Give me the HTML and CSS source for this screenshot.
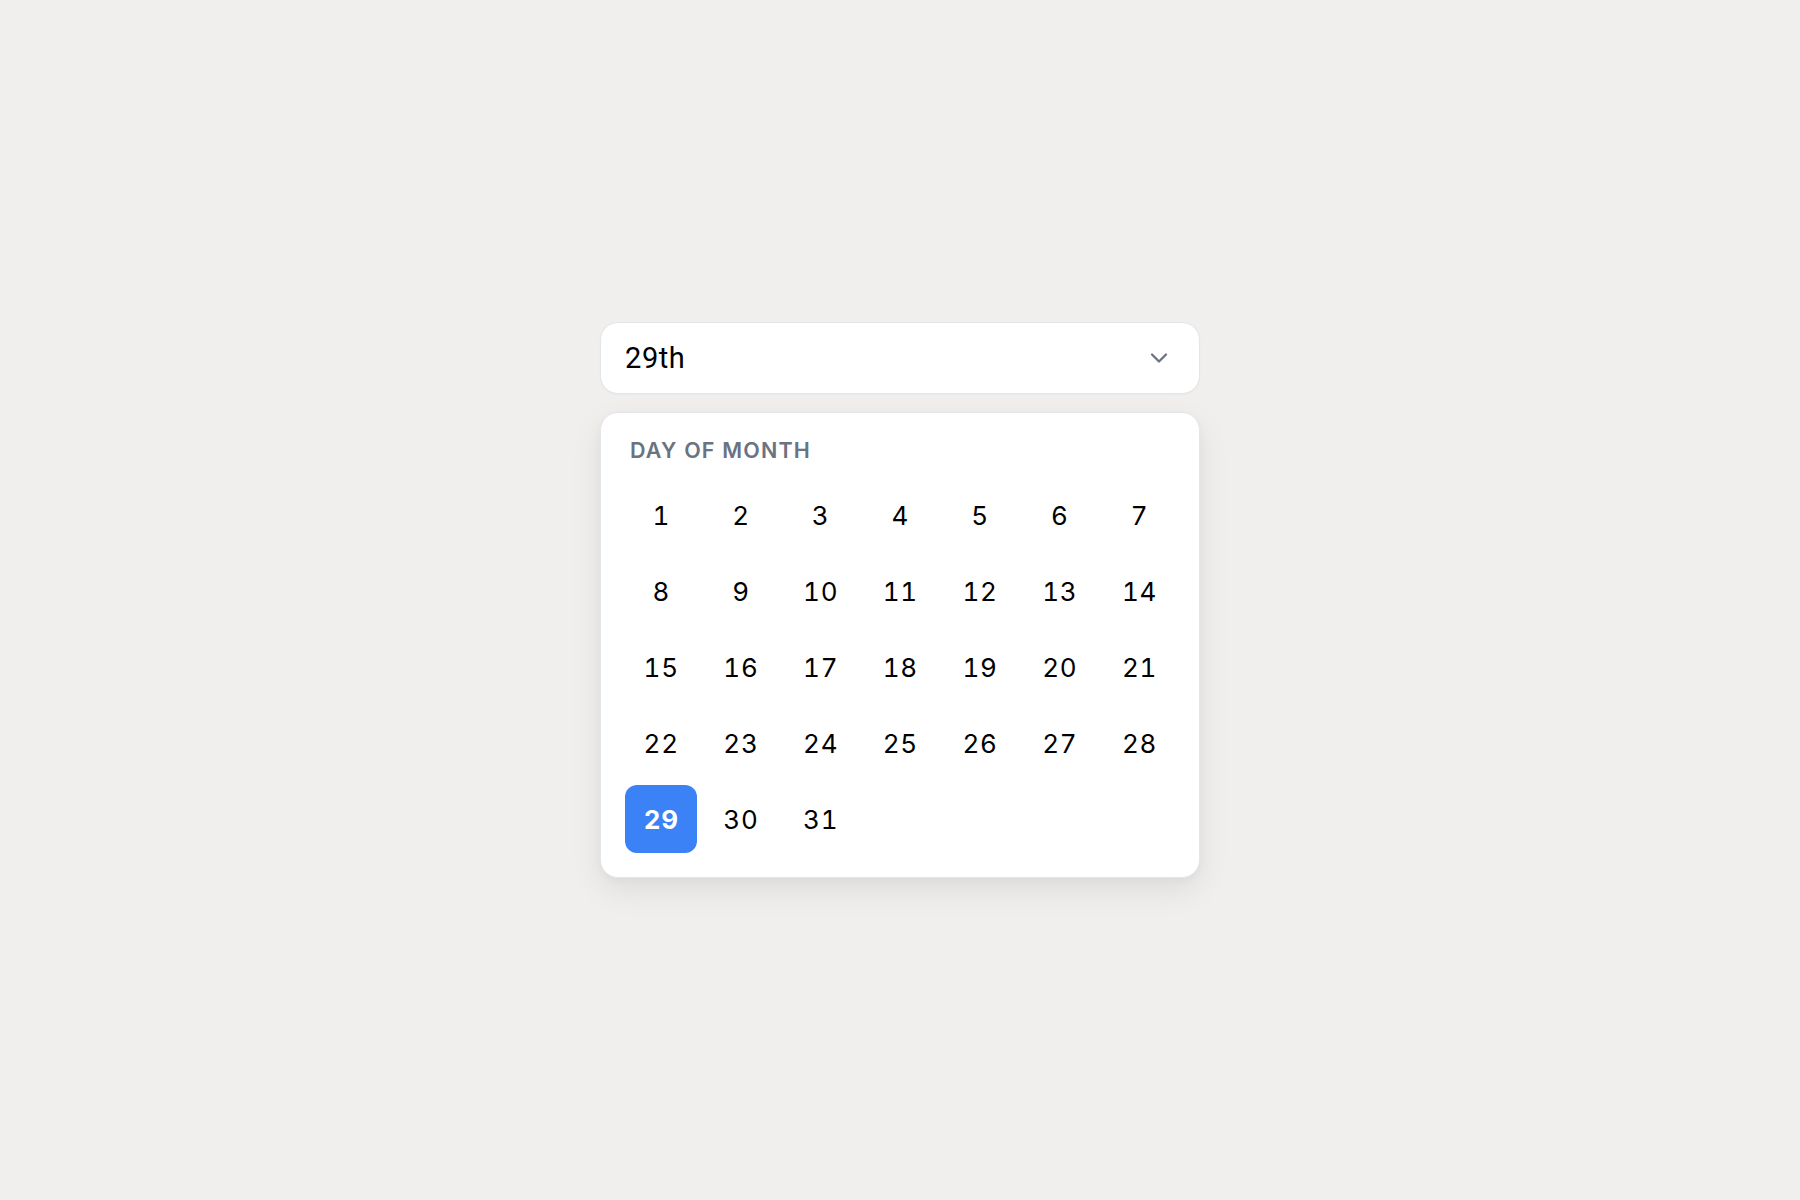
FILE: index.html
```html
<!DOCTYPE html>
<html lang="en">
<head>
  <meta charset="UTF-8">
  <meta name="viewport" content="width=device-width, initial-scale=1.0">
  <title>Day of Month</title>
  <link rel="stylesheet" href="styles.css">
</head>
<body>

  <!-- ───────── day picker ───────── -->
  <main class="picker">
    <button class="picker-trigger" type="button">
      <span class="picker-value">29th</span>
      <svg class="chevron" width="28" height="28" viewBox="0 0 24 24" fill="none" stroke="currentColor" stroke-width="2" stroke-linecap="round" stroke-linejoin="round">
        <path d="m6 9 6 6 6-6"/>
      </svg>
    </button>

    <div class="picker-panel">
      <div class="panel-label">Day of month</div>
      <div class="day-grid">
        <button class="day">1</button>
        <button class="day">2</button>
        <button class="day">3</button>
        <button class="day">4</button>
        <button class="day">5</button>
        <button class="day">6</button>
        <button class="day">7</button>
        <button class="day">8</button>
        <button class="day">9</button>
        <button class="day">10</button>
        <button class="day">11</button>
        <button class="day">12</button>
        <button class="day">13</button>
        <button class="day">14</button>
        <button class="day">15</button>
        <button class="day">16</button>
        <button class="day">17</button>
        <button class="day">18</button>
        <button class="day">19</button>
        <button class="day">20</button>
        <button class="day">21</button>
        <button class="day">22</button>
        <button class="day">23</button>
        <button class="day">24</button>
        <button class="day">25</button>
        <button class="day">26</button>
        <button class="day">27</button>
        <button class="day">28</button>
        <button class="day selected">29</button>
        <button class="day">30</button>
        <button class="day">31</button>
      </div>
    </div>
  </main>

</body>
</html>
```

FILE: styles.css
```css
/* Basic reset and layout */
html, body {
    margin: 0;
    padding: 0;
    height: 100vh;
    background-color: #f0efed;
    font-family: Inter, "Noto Sans", sans-serif;
}

body {
    display: flex;
    justify-content: center;
    align-items: center;
}

/* Picker wrapper */
.picker {
    width: 600px;
    display: flex;
    flex-direction: column;
    gap: 18px;
}

/* Select-like trigger */
.picker-trigger {
    display: flex;
    align-items: center;
    justify-content: space-between;
    height: 72px;
    padding: 0 26px 0 24px;
    background-color: #fff;
    border: 1px solid #e4e5e9;
    border-radius: 18px;
    box-sizing: border-box;
    box-shadow: 0 1px 2px rgba(0, 0, 0, 0.03);
    cursor: pointer;
    font-family: Roboto, "Liberation Sans", sans-serif;
    font-size: 29px;
    letter-spacing: 0.02em;
    color: #000;
}

.chevron {
    color: #6b7280;
}

/* Dropdown panel */
.picker-panel {
    background-color: #fff;
    border: 1px solid #e4e5e9;
    border-radius: 18px;
    padding: 24px;
    box-shadow: 0 12px 32px rgba(0, 0, 0, 0.08), 0 3px 8px rgba(0, 0, 0, 0.03);
}

.panel-label {
    font-size: 21.5px;
    line-height: 26px;
    font-weight: 600;
    letter-spacing: 0.055em;
    text-transform: uppercase;
    color: #6b7280;
    margin: 0 0 18px 5px;
}

.day-grid {
    display: grid;
    grid-template-columns: repeat(7, 1fr);
    grid-auto-rows: 68px;
    gap: 8px;
}

.day {
    display: flex;
    align-items: center;
    justify-content: center;
    border: none;
    border-radius: 12px;
    background: transparent;
    font-family: Inter, "Noto Sans", sans-serif;
    font-size: 26px;
    font-variant-numeric: tabular-nums;
    letter-spacing: 0.03em;
    text-indent: 0.03em;
    color: #000;
    cursor: pointer;
    padding: 0;
}

.day.selected {
    background-color: #3b82f6;
    color: #fff;
    font-weight: 700;
}
```
